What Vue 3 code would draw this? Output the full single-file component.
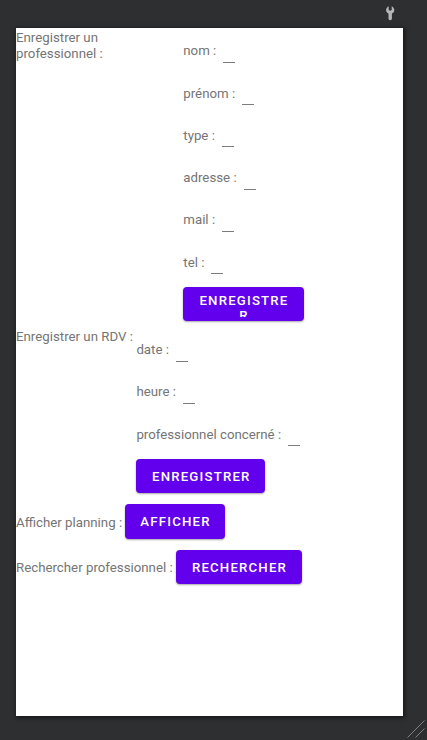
<script setup>
const proFields = ['nom : ', 'prénom : ', 'type : ', 'adresse : ', 'mail : ', 'tel : ']
const rdvFields = ['date : ', 'heure : ', 'professionnel concerné : ']
</script>

<template>
  <div class="surface">
    <header class="toolbar">
      <svg class="wrench" width="10" height="16" viewBox="0 0 10 16">
        <path d="M2.7 0.2 C1 1 0.1 2.5 0.1 4 C0.1 5.8 1.1 7 2.5 7.6 V12.8 Q2.5 14.2 4.2 14.2 Q5.9 14.2 5.9 12.8 V7.6 C7.3 7 8.3 5.8 8.3 4 C8.3 2.5 7.4 1 5.7 0.2 V4 L4.2 4.8 L2.7 4 Z" fill="#b5b6b7" />
      </svg>
    </header>
    <main class="screen">
      <section class="row pro">
        <span class="label title">Enregistrer un professionnel :</span>
        <div class="form">
          <div v-for="f in proFields" :key="f" class="field">
            <span class="label">{{ f }}</span><i class="line"></i>
          </div>
          <button class="btn narrow"><span class="clip">ENREGISTRE<br />R</span></button>
        </div>
      </section>
      <section class="row rdv">
        <span class="label title">Enregistrer un RDV : </span>
        <div class="form">
          <div v-for="f in rdvFields" :key="f" class="field">
            <span class="label">{{ f }}</span><i class="line"></i>
          </div>
          <button class="btn save">ENREGISTRER</button>
        </div>
      </section>
      <section class="row action">
        <span class="label planning">Afficher planning : </span>
        <button class="btn show">AFFICHER</button>
      </section>
      <section class="row action">
        <span class="label search">Rechercher professionnel : </span>
        <button class="btn find">RECHERCHER</button>
      </section>
    </main>
    <svg class="grip" width="18" height="18" viewBox="0 0 18 18">
      <path d="M0.5 17.5 L17.5 0.5 M8.5 17.5 L17.5 8.5" stroke="#8b8c8d" stroke-width="0.9" fill="none" />
    </svg>
  </div>
</template>

<style>
body {
  margin: 0;
  background: #2e2f31;
}
</style>

<style scoped>
.surface {
  position: relative;
  box-sizing: border-box;
  width: 427px;
  height: 740px;
  padding: 0 24px 0 16px;
  overflow: hidden;
  background: #2e2f31;
  font-family: Roboto, sans-serif;
  font-size: 13.27px;
}
.toolbar {
  box-sizing: border-box;
  height: 28px;
  padding: 6px 7px 0 0;
  display: flex;
  justify-content: flex-end;
}
.wrench {
  display: block;
}
.screen {
  height: 688px;
  background: #fff;
  box-shadow: 1px 1px 4px 1px rgba(0, 0, 0, 0.5);
}
.row {
  display: flex;
  align-items: flex-start;
}
.label {
  flex: none;
  color: #757575;
  line-height: 16px;
  white-space: pre;
}
.title {
  padding-top: 2px;
}
.pro .title {
  width: 167.3px;
  box-sizing: border-box;
  padding-right: 60px;
  white-space: normal;
}
.rdv .title {
  width: 120.4px;
}
.field {
  display: flex;
  align-items: flex-start;
  box-sizing: border-box;
  height: 42.25px;
  padding-top: 15.3px;
}
.line {
  width: 12px;
  height: 1px;
  margin: 18.7px 0 0 3.7px;
  background: #7c7c7c;
}
.btn {
  display: block;
  flex: none;
  box-sizing: border-box;
  height: 34.2px;
  margin: 5.55px 0;
  padding: 0 0 0 1px;
  border: 0;
  border-radius: 4px;
  background: #6200ee;
  box-shadow: 0 1px 2px rgba(0, 0, 0, 0.35);
  color: #fff;
  font: 500 13.22px/35px Roboto, sans-serif;
  letter-spacing: 1.18px;
  text-align: center;
}
.narrow {
  display: flex;
  justify-content: center;
  align-items: flex-start;
  width: 120.3px;
  padding-top: 5.6px;
  line-height: 15.6px;
}
.clip {
  display: block;
  height: 24.7px;
  overflow: hidden;
}
.save {
  width: 128.8px;
}
.action {
  height: 45.3px;
}
.action .label {
  padding-top: 16px;
}
.planning {
  width: 109px;
}
.show {
  width: 100px;
}
.search {
  width: 160.2px;
}
.find {
  width: 125.6px;
}
.grip {
  position: absolute;
  right: 2px;
  bottom: 2px;
}
</style>
